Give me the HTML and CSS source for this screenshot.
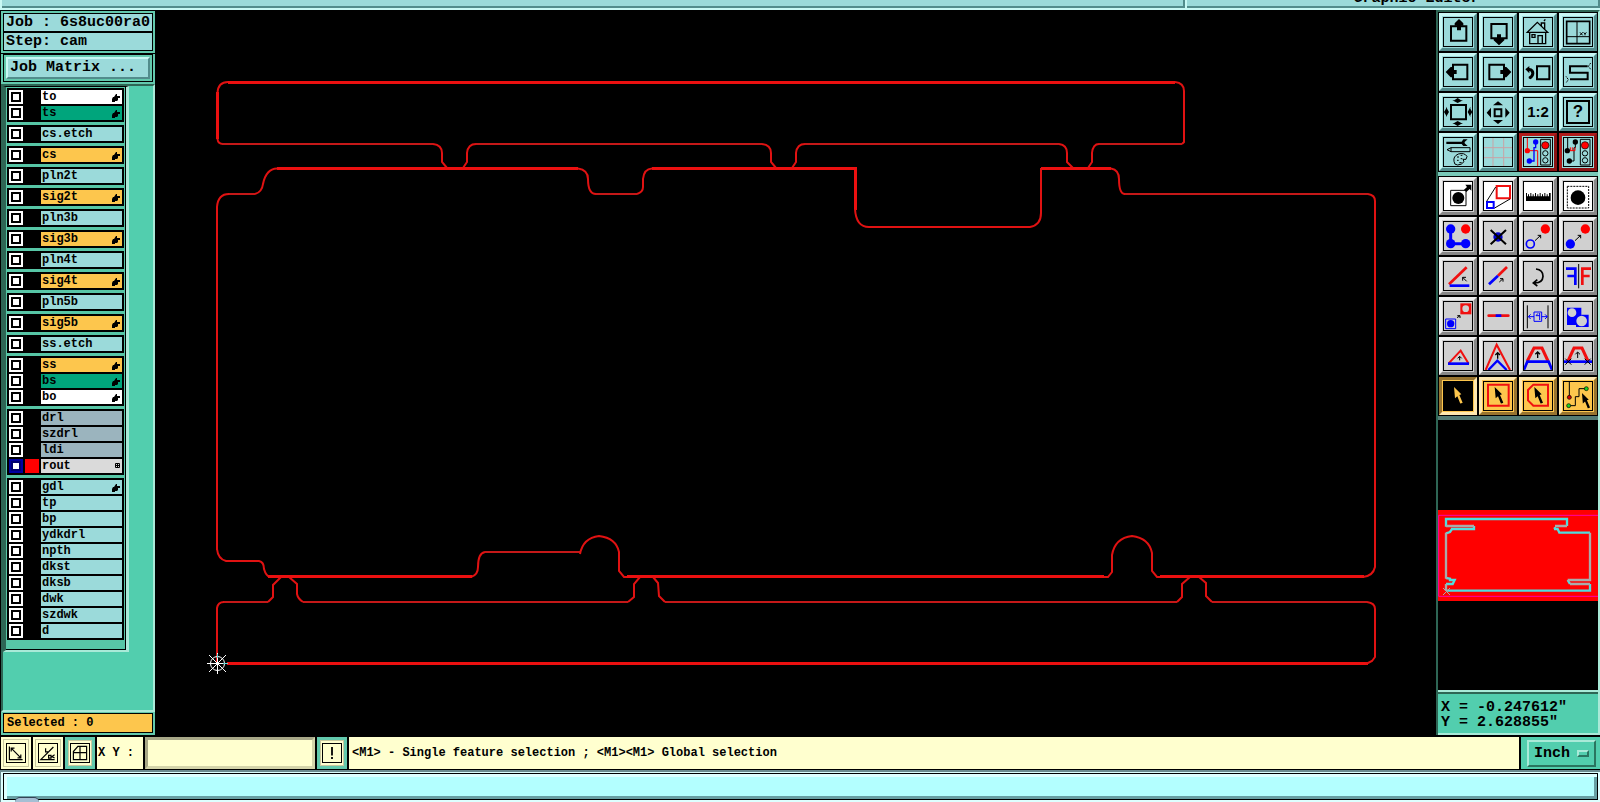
FILE: index.html
```html
<!DOCTYPE html>
<html lang="en">
  <head>
    <meta charset="UTF-8" />
    <meta name="viewport" content="width=device-width, initial-scale=1.0" />
    <title>Graphic Editor</title>
    <link rel="stylesheet" href="styles.css">
  </head>
  <body>
    <svg class="defs" aria-hidden="true">
      <symbol id="hand" viewBox="0 0 8 8">
        <path d="M0 5 L1 3 H2 L4 0 H5 V2 H8 V4 H6 V6 L5 7 H3 V8 H0 Z" />
      </symbol>
      <symbol id="cursor" viewBox="0 0 30 50">
        <path d="M3 0 L25 22 L19 24 L29 47 L22 50 L13 28 L6 34 Z" />
      </symbol>
    </svg>

    <header class="topbar">
      <div class="top-menu"></div>
      <div class="top-title"><span>Graphic Editor</span></div>
    </header>

    <main class="workspace">
      <!-- Layers -->
      <aside class="sidebar">
        <div class="job-info">
          <div>Job : 6s8uc00ra0</div>
          <div>Step: cam</div>
        </div>
        <div class="matrix-box">
          <button class="matrix-button" type="button">Job Matrix ...</button>
        </div>
        <div class="layer-area">
          <div class="layer-list">
            <div class="group">
              <label class="layer white"><input type="checkbox"><i></i><span>to</span><svg><use href="#hand"/></svg></label>
              <label class="layer green"><input type="checkbox"><i></i><span>ts</span><svg><use href="#hand"/></svg></label>
            </div>
            <div class="group">
              <label class="layer"><input type="checkbox"><i></i><span>cs.etch</span></label>
            </div>
            <div class="group">
              <label class="layer orange"><input type="checkbox"><i></i><span>cs</span><svg><use href="#hand"/></svg></label>
            </div>
            <div class="group">
              <label class="layer"><input type="checkbox"><i></i><span>pln2t</span></label>
            </div>
            <div class="group">
              <label class="layer orange"><input type="checkbox"><i></i><span>sig2t</span><svg><use href="#hand"/></svg></label>
            </div>
            <div class="group">
              <label class="layer"><input type="checkbox"><i></i><span>pln3b</span></label>
            </div>
            <div class="group">
              <label class="layer orange"><input type="checkbox"><i></i><span>sig3b</span><svg><use href="#hand"/></svg></label>
            </div>
            <div class="group">
              <label class="layer"><input type="checkbox"><i></i><span>pln4t</span></label>
            </div>
            <div class="group">
              <label class="layer orange"><input type="checkbox"><i></i><span>sig4t</span><svg><use href="#hand"/></svg></label>
            </div>
            <div class="group">
              <label class="layer"><input type="checkbox"><i></i><span>pln5b</span></label>
            </div>
            <div class="group">
              <label class="layer orange"><input type="checkbox"><i></i><span>sig5b</span><svg><use href="#hand"/></svg></label>
            </div>
            <div class="group">
              <label class="layer"><input type="checkbox"><i></i><span>ss.etch</span></label>
            </div>
            <div class="group">
              <label class="layer orange"><input type="checkbox"><i></i><span>ss</span><svg><use href="#hand"/></svg></label>
              <label class="layer green"><input type="checkbox"><i></i><span>bs</span><svg><use href="#hand"/></svg></label>
              <label class="layer white"><input type="checkbox"><i></i><span>bo</span><svg><use href="#hand"/></svg></label>
            </div>
            <div class="group">
              <label class="layer slate"><input type="checkbox"><i></i><span>drl</span></label>
              <label class="layer slate"><input type="checkbox"><i></i><span>szdrl</span></label>
              <label class="layer slate"><input type="checkbox"><i></i><span>ldi</span></label>
              <label class="layer grey"><input type="checkbox" checked><i></i><span>rout</span><svg class="affected" viewBox="0 0 15 15"><path d="M1.5 1.5 H13.5 V13.5 H1.5 Z M7.5 1 V14 M1 7.5 H14" fill="none" stroke="#000" stroke-width="3" /></svg></label>
            </div>
            <div class="group">
              <label class="layer"><input type="checkbox"><i></i><span>gdl</span><svg><use href="#hand"/></svg></label>
              <label class="layer"><input type="checkbox"><i></i><span>tp</span></label>
              <label class="layer"><input type="checkbox"><i></i><span>bp</span></label>
              <label class="layer"><input type="checkbox"><i></i><span>ydkdrl</span></label>
              <label class="layer"><input type="checkbox"><i></i><span>npth</span></label>
              <label class="layer"><input type="checkbox"><i></i><span>dkst</span></label>
              <label class="layer"><input type="checkbox"><i></i><span>dksb</span></label>
              <label class="layer"><input type="checkbox"><i></i><span>dwk</span></label>
              <label class="layer"><input type="checkbox"><i></i><span>szdwk</span></label>
              <label class="layer"><input type="checkbox"><i></i><span>d</span></label>
            </div>
          </div>
        </div>
        <div class="selected">Selected : 0</div>
      </aside>

      <!-- Board outline -->
      <section class="canvas">
        <svg viewBox="155 10 1281 725" fill="none" stroke="#e01212" stroke-width="2">
          <!-- top rail -->
          <path stroke="#ec1010" stroke-width="3" d="M228 82.500 H1175 M217.500 92 V139 M277 168.500 H578 M652 168.500 H855.500 V210 M1041 168.500 H1111" />
          <path d="M228 82 Q218 82 217.500 93 M217.500 139 Q218 144 223 144 M1175 82 Q1184 83 1184 91 V142 L1182 144" />
          <path stroke="#c41818" d="M222 144 H433 M476 144 H762 M805 144 H1059 M1099 144 H1182 M228 194 H255 M596 194 H637 M1124 194 H1368" />
          <path d="M433 144 Q442 145 442 153 V162 L447 168 M463 168 L467 162 V153 Q468 144 476 144" />
          <path d="M762 144 Q771 145 771 153 V162 L776 168 M792 168 L796 162 V153 Q797 144 805 144" />
          <path d="M1059 144 Q1067 145 1067 153 V162 L1073 168 M1088 168 L1092 162 V153 Q1093 144 1099 144" />
          <!-- main board -->
          <path d="M217 550 V207 Q218 194 229 194 M255 194 Q262 192 263 184 Q266 169 277 168.500" />
          <path d="M578 168.500 Q588 170 588 179 Q588 194 596 194 M637 194 Q643 192 643 187 V179 Q644 169 652 168.500" />
          <path d="M855 209 Q856 227 869 227 H1030 Q1041 225 1041 213 V168" />
          <path d="M1111 168.500 Q1119 170 1119 179 Q1119 194 1125 194 M1368 194 Q1375 195 1375 201 V567 Q1373 576 1363 577" />
          <path d="M217 549 Q218 559 226 561 H259 Q264 562 264 569 Q266 576 270 577 M471 577 Q478 575 478 567 Q478 553 485 552" />
          <path stroke="#c41818" d="M485 552 H580" />
          <path d="M580 554 Q583 538 599 536 Q616 538 619 552 V571 L624 577 H630 M1100 577 H1108 L1112 572 V555 Q1115 538 1132 536 Q1149 538 1152 553 V571 L1157 577 H1162" />
          <path stroke="#ec1010" stroke-width="3" d="M268 576.500 H472 M627 576.500 H1104 M1160 576.500 H1364 M227 663.500 H1368" />
          <!-- bottom rail -->
          <path stroke="#c41818" d="M223 602 H268 M303 602 H628 M665 602 H1177 M1212 602 H1367" />
          <path d="M217 664 V608 Q218 602 224 602 M268 602 L273 597 V585 L281 577 M289 577 L297 584 V594 Q298 599 303 602" />
          <path d="M628 602 L634 597 V584 L640 577 M653 577 L658 583 L659 596 L665 602" />
          <path d="M1177 602 L1182 597 V584 L1190 577 M1199 577 L1206 583 V596 L1212 602 M1367 602 Q1375 603 1375 609 V657 L1372 661 L1366 664" />
          <!-- origin -->
          <g stroke="#fff" stroke-width="1">
            <circle cx="217.500" cy="663.500" r="7" />
            <path d="M207 663.500 H228 M217.500 653 V674 M209 655 L226 672 M226 655 L209 672" />
            <path stroke="#63d8d8" d="M217.500 654 V658 M223 663.500 H228" />
          </g>
        </svg>
      </section>

      <!-- Tools -->
      <aside class="tools">
        <div class="tool-grid">
          <button type="button" class="tool" aria-label="Pan up"><svg viewBox="41 53 84 84"><path d="M62 78 H108 V121 H62 Z" fill="none" stroke="#000" stroke-width="6"/><path d="M86 56 L99 69 V76 H92 V90 H80 V76 H73 V69 Z"/></svg></button>
          <button type="button" class="tool" aria-label="Pan down"><svg viewBox="161 53 84 84"><path d="M183 71 H229 V114 H183 Z" fill="none" stroke="#000" stroke-width="6"/><path d="M206 135 L222 120 V116 H212 V102 H200 V116 H190 V120 Z"/></svg></button>
          <button type="button" class="tool" aria-label="Home"><svg viewBox="282 53 84 84"><path d="M292 96 L322 66 L353 96 Z M299 94 V130 H347 V94 M324 130 V106 H337 V130 M306 103 H315 V111 H306 Z M334 76 V68 H344 V86 M342 62 L346 57" fill="none" stroke="#000" stroke-width="4"/></svg></button>
          <button type="button" class="tool" aria-label="Zoom window"><svg viewBox="402 53 84 84"><path d="M410 63 H479 V130 H410 Z" fill="none" stroke="#000" stroke-width="5"/><path d="M441 63 V130 M410 109 H479 M450 96 L458 105 M458 96 L450 105 M461 96 L465 101 L469 96 M465 101 V105" fill="none" stroke="#000" stroke-width="3"/></svg></button>

          <button type="button" class="tool" aria-label="Pan left"><svg viewBox="41 172 84 84"><path d="M68 192 H111 V236 H68 Z" fill="none" stroke="#000" stroke-width="6"/><path d="M46 214 L61 199 H66 V208 H79 V220 H66 V230 H61 Z"/></svg></button>
          <button type="button" class="tool" aria-label="Pan right"><svg viewBox="161 172 84 84"><path d="M177 192 H221 V236 H177 Z" fill="none" stroke="#000" stroke-width="6"/><path d="M243 214 L228 199 H223 V208 H210 V220 H223 V230 H228 Z"/></svg></button>
          <button type="button" class="tool" aria-label="Previous view"><svg viewBox="282 172 84 84"><path d="M321 197 H358 V236 H321 Z" fill="none" stroke="#000" stroke-width="6"/><path d="M286 206 L298 196 V202 Q313 204 313 218 Q312 230 301 236 L296 233 V228 Q304 225 304 218 Q303 211 298 211 V218 Z"/></svg></button>
          <button type="button" class="tool" aria-label="Net path"><svg viewBox="402 172 84 84"><path d="M473 197 H420 V216 H473 V236 H420" fill="none" stroke="#000" stroke-width="6"/><path d="M482 187 L475 197 L483 207 M408 227 L415 237 L408 247" fill="none" stroke="#000" stroke-width="3" stroke-dasharray="4 2"/></svg></button>

          <button type="button" class="tool" aria-label="Zoom out"><svg viewBox="41 293 84 84"><path d="M62 314 H107 V357 H62 Z" fill="none" stroke="#000" stroke-width="6"/><path d="M82 308 L98 300 H92 L82 293 L72 300 H66 Z M82 362 L98 371 H92 L82 377 L72 371 H66 Z M56 335 L47 319 V325 L41 335 L47 345 V350 Z M112 335 L120 319 V325 L126 335 L120 345 V350 Z"/></svg></button>
          <button type="button" class="tool" aria-label="Zoom in"><svg viewBox="161 293 84 84"><path d="M193 327 H213 V348 H193 Z" fill="none" stroke="#000" stroke-width="6"/><path d="M203 303 L218 315 H188 Z M203 371 L218 359 H188 Z M169 337 L182 322 V352 Z M238 337 L225 322 V352 Z"/></svg></button>
          <button type="button" class="tool tool-text" aria-label="Scale 1:2"><span>1:2</span></button>
          <button type="button" class="tool tool-text" aria-label="Help"><span class="help">?</span></button>

          <button type="button" class="tool" aria-label="Settings"><svg viewBox="41 413 84 84"><path d="M48 424 H94 L99 417 H112 L103 425 V429 L112 437 H99 L94 431 H48 Z"/><path d="M50 448 L62 442 H119 V454 H62 Z M62 442 V454 M71 483 Q68 468 84 461 Q102 456 110 468 L107 477 H98 L101 484 Q94 494 82 494 Q71 494 71 483 M80 470 H86 M91 465 H96 M80 480 H85 M91 475 H96 M87 487 H94" fill="none" stroke="#000" stroke-width="3"/></svg></button>
          <button type="button" class="tool" aria-label="Grid"><svg viewBox="161 413 84 84"><path d="M188 413 V497 M220 413 V497 M161 442 H245 M161 472 H245" fill="none" stroke="#c9a3a6" stroke-width="3"/></svg></button>
          <button type="button" class="tool red" aria-label="Net check on"><svg viewBox="282 413 84 84"><g fill="none" stroke-width="3"><path d="M292 413 V451 H323 V497" stroke="#f00"/><path d="M317 426 V442 H312 V482 H298" stroke="#00f" stroke-width="4"/><path d="M332 417 H361 V494 H332 Z" stroke="#000"/><circle cx="346" cy="459" r="8" stroke="#000"/><circle cx="346" cy="480" r="8" stroke="#000"/></g><circle cx="346" cy="435" r="11" fill="#f00" stroke="#000" stroke-width="2"/><circle cx="292" cy="451" r="8" fill="#f00"/><circle cx="317" cy="425" r="8" fill="#00f"/><circle cx="298" cy="482" r="8" fill="#00f"/></svg></button>
          <button type="button" class="tool red" aria-label="Net check off"><svg viewBox="402 413 84 84"><g fill="none" stroke="#000" stroke-width="3"><path d="M413 413 V451 M436 426 V442 H432 V482 H418 M451 417 H480 V494 H451 Z"/><circle cx="465" cy="459" r="8"/><circle cx="465" cy="480" r="8"/><path d="M415 451 H435 V441 M427 451 V441 M421 451 V441" stroke="#f00"/></g><circle cx="465" cy="435" r="11" fill="#f00" stroke="#000" stroke-width="2"/><circle cx="412" cy="451" r="8"/><circle cx="436" cy="425" r="8"/><circle cx="418" cy="482" r="8"/></svg></button>
        </div>

        <div class="tool-grid edit">
          <button type="button" class="tool white" aria-label="Move"><svg viewBox="41 33 84 84"><path d="M61 58 H107 V104 H61 Z" fill="none" stroke="#000" stroke-width="3"/><circle cx="84" cy="81" r="18"/><path d="M101 56 L110 48 L105 41 H123 V59 L118 54 L108 63 Z"/></svg></button>
          <button type="button" class="tool white" aria-label="Resize"><svg viewBox="161 33 84 84"><path d="M199 45 H239 V82 H199 Z" fill="none" stroke="#f01010" stroke-width="6"/><path d="M170 93 H190 V111 H170 Z" fill="none" stroke="#00f" stroke-width="6"/><path d="M196 48 L169 91 M239 84 L193 111" stroke="#000" stroke-width="3"/></svg></button>
          <button type="button" class="tool white" aria-label="Measure"><svg viewBox="282 33 84 84"><path d="M288 66 H291 V76 H294 V70 H297 V76 H301 V66 H304 V76 H308 V70 H311 V76 H315 V66 H318 V76 H322 V70 H325 V76 H329 V66 H332 V76 H336 V70 H339 V76 H343 V66 H346 V76 H350 V70 H353 V76 H357 V66 H362 V90 H288 Z"/></svg></button>
          <button type="button" class="tool white" aria-label="Select area"><svg viewBox="402 33 84 84"><path d="M412 46 H476 V111 H412 Z" fill="none" stroke="#000" stroke-width="3" stroke-dasharray="6 3"/><circle cx="444" cy="80" r="22"/></svg></button>

          <button type="button" class="tool" aria-label="Connect"><svg viewBox="41 154 84 84"><path d="M61 175 V219 H106" fill="none" stroke="#00f" stroke-width="9"/><circle cx="61" cy="175" r="14" fill="#00f"/><circle cx="61" cy="219" r="14" fill="#00f"/><circle cx="106" cy="219" r="14" fill="#00f"/><circle cx="106" cy="175" r="14" fill="#f00"/></svg></button>
          <button type="button" class="tool" aria-label="Delete"><svg viewBox="161 154 84 84"><circle cx="203" cy="199" r="14" fill="#00c"/><path d="M181 178 L227 221 M227 178 L181 221" stroke="#000" stroke-width="6"/></svg></button>
          <button type="button" class="tool" aria-label="Copy"><svg viewBox="282 154 84 84"><circle cx="301" cy="220" r="12" fill="none" stroke="#00f" stroke-width="5"/><circle cx="346" cy="175" r="14" fill="#f00"/><path d="M315 210 L332 194 M323 194 H332 V203" fill="none" stroke="#000" stroke-width="3"/></svg></button>
          <button type="button" class="tool" aria-label="Move feature"><svg viewBox="402 154 84 84"><circle cx="421" cy="220" r="14" fill="#00f"/><circle cx="466" cy="175" r="14" fill="#f00"/><path d="M435 210 L452 194 M443 194 H452 V203" fill="none" stroke="#000" stroke-width="3"/></svg></button>

          <button type="button" class="tool" aria-label="Rotate"><svg viewBox="41 275 84 84"><path d="M109 291 L56 342" stroke="#f01010" stroke-width="8"/><path d="M58 346 H117" stroke="#00f" stroke-width="8"/><path d="M109 333 L97 321 M97 331 V321 H107" fill="none" stroke="#000" stroke-width="3"/></svg></button>
          <button type="button" class="tool" aria-label="Extend line"><svg viewBox="161 275 84 84"><path d="M230 290 L203 316" stroke="#f01010" stroke-width="8"/><path d="M203 316 L176 342" stroke="#00f" stroke-width="8"/><path d="M207 335 L218 325 M209 325 H218 V334" fill="none" stroke="#000" stroke-width="3"/></svg></button>
          <button type="button" class="tool" aria-label="Undo"><svg viewBox="282 275 84 84"><path d="M318 296 Q339 298 339 318 Q338 337 315 338 M322 328 L310 338 L322 347" fill="none" stroke="#000" stroke-width="5"/></svg></button>
          <button type="button" class="tool" aria-label="Mirror"><svg viewBox="402 275 84 84"><path d="M408 295 H436 V344 M412 317 H436" fill="none" stroke="#00f" stroke-width="8"/><path d="M483 295 H457 V344 M457 317 H479" fill="none" stroke="#f01010" stroke-width="8"/><path d="M446 281 V354" stroke="#000" stroke-width="3"/></svg></button>

          <button type="button" class="tool" aria-label="Replace pad"><svg viewBox="41 35 84 84"><path d="M90 39 H123 V72 H90 Z" fill="#f01010"/><circle cx="106" cy="55" r="10" fill="#d0d0d0"/><path d="M46 86 H76 V115 H46 Z" fill="none" stroke="#00f" stroke-width="3"/><circle cx="61" cy="100" r="11" fill="#00f"/><path d="M80 82 L88 77 M81 76 H89 V83" fill="none" stroke="#000" stroke-width="3"/></svg></button>
          <button type="button" class="tool" aria-label="Merge line"><svg viewBox="161 35 84 84"><path d="M175 76 H234" stroke="#f01010" stroke-width="8" stroke-linecap="round"/><path d="M196 76 H213" stroke="#00f" stroke-width="8"/></svg></button>
          <button type="button" class="tool" aria-label="Spacing"><svg viewBox="282 35 84 84"><path d="M292 45 V114 M354 45 V114" stroke="#000" stroke-width="3"/><path d="M312 65 H335 V93 H312 Z M295 79 H312 M335 79 H352 M302 72 L295 79 L302 86 M345 72 L352 79 L345 86 M324 69 L318 76 H329 M329 68 V89" fill="none" stroke="#00f" stroke-width="3"/></svg></button>
          <button type="button" class="tool" aria-label="Union"><svg viewBox="402 35 84 84"><path d="M411 52 H454 V73 H476 V110 H438 V104 H411 Z" fill="#00f"/><circle cx="426" cy="67" r="13" fill="#d0d0d0"/><circle cx="455" cy="92" r="16" fill="#d0d0d0"/></svg></button>

          <button type="button" class="tool" aria-label="Triangle"><svg viewBox="41 155 84 84"><path d="M55 219 L91 181 L115 220" fill="none" stroke="#f01010" stroke-width="6"/><path d="M53 220 H116" stroke="#00f" stroke-width="8"/><path d="M88 210 V199 M82 204 L88 198 L94 204" fill="none" stroke="#000" stroke-width="3"/></svg></button>
          <button type="button" class="tool" aria-label="Stretch corner"><svg viewBox="161 155 84 84"><path d="M166 239 L199 163 L239 239" fill="none" stroke="#f01010" stroke-width="6"/><path d="M174 239 L201 211 L229 239" fill="none" stroke="#00f" stroke-width="7"/><path d="M202 205 V188 M195 194 L202 187 L209 194" fill="none" stroke="#000" stroke-width="4"/></svg></button>
          <button type="button" class="tool" aria-label="Stretch line"><svg viewBox="282 155 84 84"><path d="M292 212 L312 173 H336 L354 212" fill="none" stroke="#f01010" stroke-width="9"/><path d="M282 238 L292 214 H356 L366 238" fill="none" stroke="#00f" stroke-width="8"/><path d="M323 203 V186 M316 192 L323 185 L330 192" fill="none" stroke="#000" stroke-width="4"/></svg></button>
          <button type="button" class="tool" aria-label="Trim line"><svg viewBox="402 155 84 84"><path d="M414 212 L432 173 H456 L474 212" fill="none" stroke="#f01010" stroke-width="9"/><path d="M402 214 H486" stroke="#00f" stroke-width="8"/><path d="M443 203 V186 M436 192 L443 185 L450 192 M406 205 L424 223 M424 205 L406 223 M464 205 L482 223 M482 205 L464 223" fill="none" stroke="#000" stroke-width="3"/></svg></button>

          <button type="button" class="tool orange active" aria-label="Select single"><svg viewBox="41 276 84 84"><use href="#cursor" x="68" y="291" width="30" height="50" fill="#fdc64d"/></svg></button>
          <button type="button" class="tool orange" aria-label="Select in frame"><svg viewBox="161 276 84 84"><path d="M173 284 H235 V347 H173 Z" fill="none" stroke="#f01010" stroke-width="6"/><use href="#cursor" x="190" y="291" width="30" height="50"/></svg></button>
          <button type="button" class="tool orange" aria-label="Select in polygon"><svg viewBox="282 276 84 84"><path d="M310 284 H354 V347 H310 L294 331 V300 Z" fill="none" stroke="#f01010" stroke-width="6"/><use href="#cursor" x="310" y="291" width="30" height="50"/></svg></button>
          <button type="button" class="tool orange" aria-label="Select net"><svg viewBox="402 276 84 84"><path d="M418 276 V322 M416 347 H436 V320 H447 V296 H469" fill="none" stroke="#000" stroke-width="3"/><circle cx="418" cy="322" r="6" fill="#d00000" stroke="#000" stroke-width="2"/><circle cx="416" cy="347" r="6" fill="#20d020" stroke="#000" stroke-width="2"/><circle cx="469" cy="296" r="6" fill="#20d020" stroke="#000" stroke-width="2"/><use href="#cursor" x="453" y="308" width="28" height="48"/></svg></button>
        </div>

        <!-- Overview -->
        <div class="overview">
          <svg viewBox="24 -210 480 810" fill="none">
            <rect x="24" y="60" width="480" height="273" fill="#f00" />
            <path d="M504 76 H26 V319 H504" stroke="#ff00a8" stroke-width="3" />
            <g stroke="#50dede" stroke-width="7">
              <path d="M48 110 V87 H411 V108 M63 117 H132 V108 M372 117 L378 112 M372 117 H383 L388 128 H480 M48 130 L60 126 L66 117 M48 264 L60 266 V270 L74 270 L68 282 H48 M48 302 H480 V282 M413 270 L420 282" />
              <path stroke="#aaa" d="M48 108 H132 M411 108 H375 M48 128 V266 M480 128 V270 H413 M420 282 H480 M48 282 V302" />
            </g>
            <path d="M39 294 L60 315 M60 294 L39 315" stroke="#aaa" stroke-width="3" />
          </svg>
        </div>
        <div class="position">
          <div>X = -0.247612"</div>
          <div>Y = 2.628855"</div>
        </div>
      </aside>
    </main>

    <!-- Command line -->
    <form class="command-bar" onsubmit="return false">
      <button type="button" class="mode" aria-label="Snap to corner"><svg viewBox="0 0 60 60"><path d="M8 8 V52 H52" /><path d="M14 14 L46 46 M14 25 V14 H25 M46 35 V46 H35" /></svg></button>
      <button type="button" class="mode" aria-label="Snap angle"><svg viewBox="0 0 60 60"><path d="M52 52 H6 L48 10 M22 14 V26 H30 M32 38 H40 V47 H32 Z M52 36 L43 42 L52 47" /></svg></button>
      <button type="button" class="mode on" aria-label="Snap to grid"><svg viewBox="0 0 60 60"><path d="M8 52 V25 L23 8 H52 V52 Z M30 8 V52 M8 29 H52" /></svg></button>
      <label class="xy-label" for="xy">X Y :</label>
      <input class="xy-input" type="text" id="xy" />
      <button type="button" class="mode on" aria-label="Messages"><svg viewBox="0 0 60 60"><path d="M30 10 V38 M30 43 V50" stroke-width="6" /></svg></button>
      <div class="message">&lt;M1&gt; - Single feature selection ; &lt;M1&gt;&lt;M1&gt; Global selection</div>
      <div class="units"><button type="button" class="unit-button">Inch <i></i></button></div>
    </form>

    <footer class="status"><div class="status-line"></div><span class="orb"></span></footer>
  </body>
</html>
```
FILE: styles.css
```css
* {
  box-sizing: border-box;
}

body {
  margin: 0;
  min-height: 100vh;
  display: flex;
  flex-direction: column;
  overflow: hidden;
  background: #000;
  color: #000;
  font-family: "Liberation Mono", "Courier New", monospace;
  font-size: 12px;
  font-weight: bold;
  line-height: 14px;
}

button,
input {
  font: inherit;
  color: inherit;
  margin: 0;
  padding: 0;
  border-radius: 0;
}

svg {
  display: block;
}

.defs {
  display: none;
}

/* Top strip */
.topbar {
  display: flex;
  height: 10px;
  background: #c8f8f4;
}

.top-menu,
.top-title {
  height: 8px;
  margin-left: 2px;
  background: #9bdada;
  border-bottom: 2px solid #528c8c;
  border-right: 2px solid #528c8c;
}

.top-menu {
  flex: 1;
}

.top-title {
  display: flex;
  justify-content: center;
  align-items: flex-end;
  width: 413px;
  padding: 0 0 1px 48px;
  font-size: 15px;
  line-height: 12px;
}

.workspace {
  flex: 1;
  display: flex;
}

/* Layers */
.sidebar {
  width: 155px;
  display: flex;
  flex-direction: column;
  background: #63c9ad;
  border-left: 1px solid #000;
}

.job-info {
  padding: 2px;
  border-top: 1px solid #000;
  border-bottom: 1px solid #000;
  font-size: 15px;
}

.job-info div {
  height: 19px;
  padding-left: 2px;
  line-height: 18px;
  white-space: nowrap;
  background: #9bdada;
  border: 1px solid #000;
}

.matrix-box {
  margin: 0 2px 2px;
  padding: 2px;
  border: 1px solid #000;
}

.matrix-button {
  display: block;
  width: 100%;
  height: 22px;
  padding-left: 2px;
  font-size: 15px;
  text-align: left;
  background: #9bdada;
  border: 2px solid;
  border-color: #c8f8f4 #528c8c #528c8c #c8f8f4;
}

.layer-area {
  flex: 1;
  padding-bottom: 10px;
  background: #52ceae;
  border: 2px solid;
  border-color: #2e6655 #a9ead8 #a9ead8 #2e6655;
}

.layer-list {
  width: 126px;
  padding: 1px 2px 7px 1px;
  background: #57c6a6;
  border-top: 1px solid #000;
  border-right: 3px solid #a9ead8;
  border-bottom: 2px solid #a9ead8;
  border-left: 3px solid #2e6655;
  box-shadow: inset -1px 0 #000, inset 0 -1px #000;
}

.group {
  display: flow-root;
  width: 117px;
  padding: 2px 2px 0;
  margin-bottom: 3px;
  background: #000;
}

.layer {
  position: relative;
  display: flex;
  gap: 2px;
  height: 14px;
  margin-bottom: 2px;
}

.layer input {
  appearance: none;
  width: 14px;
  height: 14px;
  background: #fff;
  border: 2px solid #fff;
  box-shadow: inset 0 0 0 2px #000;
}

.layer input:checked {
  border-color: #0000a0;
  box-shadow: inset 0 0 0 2px #000070;
}

.layer i {
  width: 14px;
  background: #000;
}

.layer input:checked + i {
  background: #f00;
}

.layer span {
  flex: 1;
  padding-left: 1px;
  background: #9bdada;
}

.layer.white span {
  background: #fff;
}

.layer.green span {
  background: #00a57c;
}

.layer.orange span {
  background: #fdc64d;
}

.layer.slate span {
  background: #9bb4be;
}

.layer.grey span {
  background: #dadada;
}

.layer svg {
  position: absolute;
  right: 2px;
  top: 4px;
  width: 8px;
  height: 8px;
}

.layer .affected {
  width: 5px;
  height: 5px;
}

.selected {
  height: 20px;
  margin: 1px 2px 2px;
  padding-left: 3px;
  line-height: 19px;
  background: #fdc64d;
  border: 1px solid #000;
}

.canvas {
  flex: 1;
  min-width: 0;
}

.canvas svg {
  width: 100%;
  height: 100%;
}

/* Tools */
.tools {
  width: 164px;
  display: flex;
  flex-direction: column;
  background: #000;
  border-top: 2px solid #2e6655;
  border-left: 2px solid #2e6655;
  border-right: 2px solid #a9ead8;
}

.tool-grid {
  display: grid;
  grid-template-columns: repeat(4, 38px);
  gap: 2px;
  padding: 1px;
  border-bottom: 4px solid #79c8b8;
}

.tool-grid.edit {
  border-bottom-color: #557c75;
}

.tool {
  width: 38px;
  height: 38px;
  padding: 1px;
  background: #9bdada;
  border: 3px solid;
  border-color: #c8f8f4 #528c8c #528c8c #c8f8f4;
}

.tool svg,
.tool-text span {
  width: 30px;
  height: 30px;
  border: 1px solid #000;
}

.tool-text span {
  display: flex;
  align-items: center;
  justify-content: center;
  font: bold 15px/28px "Liberation Sans", Arial, sans-serif;
}

.tool-text .help {
  font-size: 17px;
  box-shadow: inset 0 0 0 2px #9bdada, inset 0 0 0 4px #000;
}

.tool.red {
  border-color: #b01c1c #8c1414 #8c1414 #b01c1c;
}

.edit .tool {
  background: #d0d0d0;
  border-color: #f0f0f0 #888 #888 #f0f0f0;
}

.edit .tool.white svg {
  background: #fff;
}

.edit .tool.orange {
  background: #fdc64d;
  border-color: #ffe8b0 #987430 #987430 #ffe8b0;
}

.edit .tool.active {
  border-color: #987430 #ffe8b0 #ffe8b0 #987430;
}

.edit .tool.active svg {
  background: #000;
}

.overview {
  flex: 1;
  min-height: 0;
}

.overview svg {
  width: 100%;
  height: 100%;
}

.position {
  height: 45px;
  padding: 8px 3px;
  font-size: 15px;
  line-height: 15px;
  background: #52ceae;
  border-top: 2px solid #a9ead8;
  border-bottom: 2px solid #a9ead8;
  box-shadow: inset 0 2px #2e6655;
}

/* Command line */
.command-bar {
  display: flex;
  gap: 2px;
  height: 35px;
  padding: 2px 0 1px 1px;
  background: #000;
}

.mode {
  display: flex;
  align-items: center;
  justify-content: center;
  width: 30px;
  background: #ffffcf;
  border: 2px solid #ffffcf;
  box-shadow: inset 0 0 0 1px #c8c8a0;
}

.mode svg {
  flex: none;
  width: 20px;
  height: 20px;
  border: 1px solid #000;
  fill: none;
  stroke: #000;
  stroke-width: 4;
}

.mode.on {
  border: 3px solid #63c9ad;
}

.xy-label {
  width: 46px;
  padding-left: 1px;
  line-height: 33px;
  background: #ffffcf;
}

.xy-input {
  width: 170px;
  padding: 0 6px;
  background: #ffffcf;
  border: 3px solid;
  border-color: #a8a888 #d4d4aa #d4d4aa #a8a888;
  outline: 0;
}

.message {
  flex: 1;
  padding-left: 3px;
  line-height: 33px;
  background: #ffffcf;
  white-space: nowrap;
}

.units {
  width: 79px;
  padding: 3px 4px 2px 6px;
  background: #52ceae;
}

.unit-button {
  display: flex;
  align-items: center;
  justify-content: space-between;
  width: 69px;
  height: 27px;
  padding: 0 5px;
  font-size: 15px;
  background: #52ceae;
  border: 2px solid;
  border-color: #a9ead8 #2a7560 #2a7560 #a9ead8;
}

.unit-button i {
  width: 12px;
  height: 7px;
  border: 2px solid;
  border-color: #a9ead8 #2a7560 #2a7560 #a9ead8;
}

/* Status line */
.status {
  position: relative;
  height: 32px;
  padding: 1px 2px 2px;
  background: #dff;
  border-top: 2px solid #6c8c90;
  border-left: 1px solid #6c8c90;
}

.status-line {
  height: 27px;
  background: #b3ffff;
  border: 1px solid #000;
  box-shadow: inset 3px 3px #dff, inset -3px -3px #68a0a4;
}

.orb {
  position: absolute;
  left: 14px;
  bottom: 0;
  width: 24px;
  height: 5px;
  border-radius: 12px 12px 0 0;
  background: #a4bfd4;
  border-top: 1px solid #345;
}
```
